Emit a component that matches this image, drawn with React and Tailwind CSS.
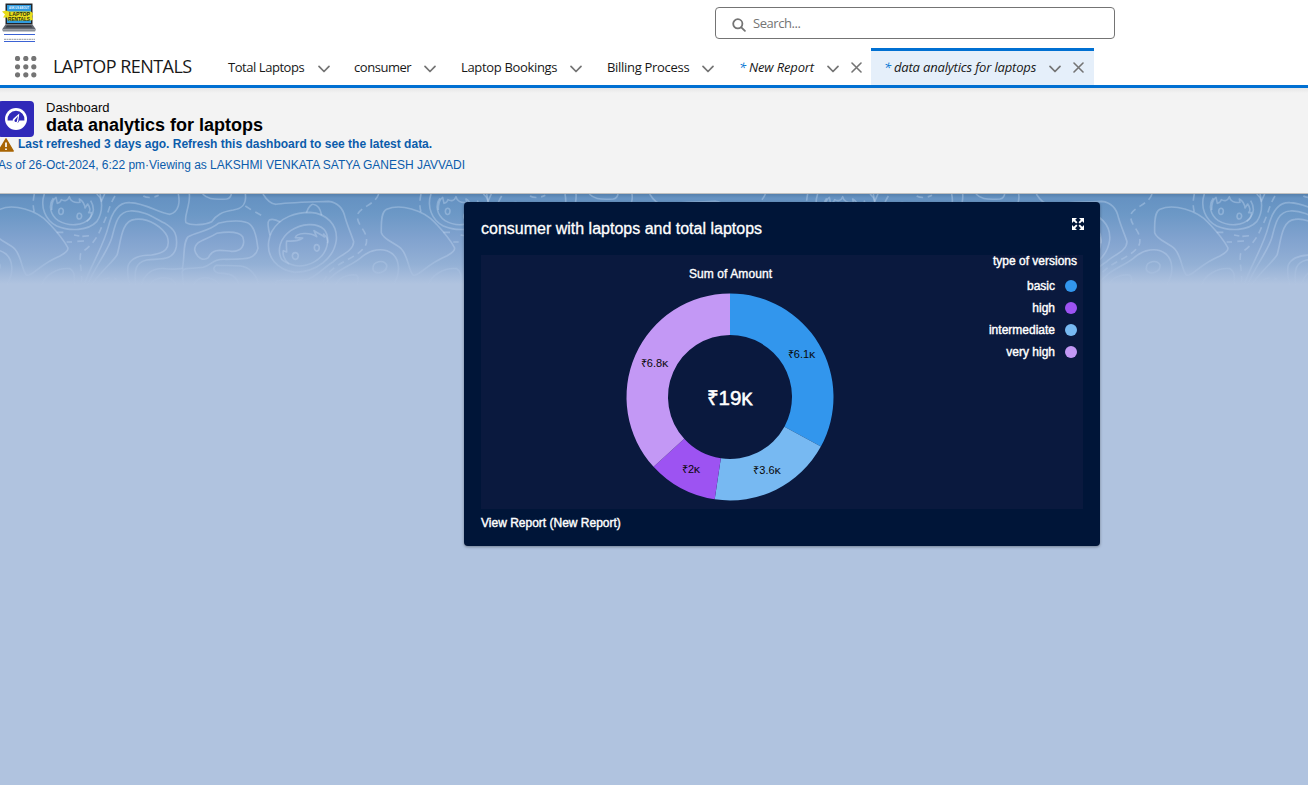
import React from "react";

const MAP_LINES = [
  // left slope and its inner ring
  "M1160 58 C1145 65 1143 90 1144 128 C1150 150 1190 160 1205 178 C1225 200 1225 240 1239 255 C1255 262 1275 225 1340 198 C1355 190 1368 182 1363 172 C1345 140 1330 125 1305 98 C1270 60 1200 40 1160 58 Z",
  // far-left summit
  "M970 290 C1000 240 1050 230 1080 205 C1110 178 1150 170 1178 192 C1200 212 1200 250 1185 275 L1180 292",
  "M1119 233 C1120 215 1150 207 1160 225 C1163 245 1135 253 1125 246 C1120 243 1118 239 1119 233 Z",
  "M1005 292 C1010 265 1040 252 1068 255 C1080 262 1074 280 1070 290",
  // bottom-left mound
  "M124 290 C130 255 175 232 210 236 C228 245 222 270 224 290",
  // head seen from the front
  "M133 12 C120 50 135 90 170 108 C210 125 265 122 290 95 C308 70 306 35 300 12",
  "M160 25 C145 45 150 75 175 92 C205 110 250 108 270 85 C285 65 280 45 272 32",
  "M155 60 C155 35 163 25 168 22 L172 40 C180 38 183 33 184 29 C193 34 203 33 208 20 C210 32 222 40 240 37 L238 27 C248 33 254 43 255 54 L263 42 C270 52 272 62 266 68 L274 68 C276 80 268 88 260 94",
  "M176 65 C176 52 189 52 190 62 C190 76 177 77 176 65 Z M231 79 C232 66 244 68 245 78 C243 91 232 89 231 79 Z",
  "M290 12 C300 20 303 28 304 34 L314 12",
  // central ridge contours
  "M250 290 C275 220 310 170 325 110 C335 70 355 35 390 38 C440 40 475 70 510 73 C538 65 540 35 535 12",
  "M260 290 C290 220 320 190 335 145 C345 110 350 65 390 63 C430 60 465 85 495 100 C525 118 533 135 529 170 C520 215 480 205 440 210 C410 217 400 235 408 290",
  "M272 290 C300 245 335 220 351 195 C362 165 362 90 405 88 C450 83 490 115 502 140 C512 175 495 190 455 195 C420 195 395 202 385 225 C380 245 385 270 390 290",
  "M424 290 C430 250 460 233 495 236 C520 240 535 235 550 236",
  "M447 290 C455 265 490 258 515 268 C525 275 528 285 529 290",
  // valley between the ridges
  "M568 12 C572 45 550 80 558 98 C575 108 615 105 635 95 C650 75 665 65 700 60 C730 55 740 40 736 12",
  "M608 12 C620 25 635 30 680 27 C690 25 693 18 694 12",
  "M547 236 C555 200 548 155 565 140 C590 125 625 125 655 100 C690 90 735 90 750 103 C770 120 770 155 774 175 C765 210 735 207 680 208 C640 205 635 225 610 232 C580 238 548 230 547 245 L550 290",
  "M584 180 C585 150 620 150 650 130 C680 125 715 123 728 140 C737 165 725 185 695 184 C665 182 640 172 625 203 C610 215 590 203 584 180 Z",
  "M578 290 C585 265 610 262 625 264 C645 268 655 278 658 290",
  "M717 290 C715 265 700 252 670 250 C640 252 635 232 650 226 C690 228 730 222 750 240 C768 255 775 275 777 290",
  // right contour round the eared head
  "M789 12 C800 30 815 42 828 43 C850 38 900 37 985 34 C1015 37 1030 55 1036 85 C1045 115 1055 135 1061 155 C1060 185 1020 195 1000 215 C980 225 955 255 925 268 C890 275 850 268 830 272 L824 290",
  "M815 125 C840 80 890 67 930 67 C980 70 1013 105 1009 150 C1002 205 950 245 885 247 C830 240 800 200 806 155 C808 142 811 133 815 125 Z",
  "M810 136 C803 110 802 95 808 90 C818 85 832 91 841 96 M919 68 C925 50 935 42 940 43 C953 45 962 60 965 76",
  "M845 208 C830 180 840 145 872 122 C905 100 950 97 972 118 C990 140 985 175 965 198 C940 225 900 235 872 223 C858 218 850 215 845 208 Z",
  "M867 222 C850 210 848 190 850 182 L860 186 C860 170 858 165 860 153 C870 153 890 157 908 144 L886 143 C890 128 930 126 950 140 L942 122 C955 132 965 133 973 141 L971 132 C980 140 985 150 982 160",
  "M877 198 C878 184 893 185 895 197 C894 211 879 212 877 198 Z M943 174 C943 160 956 161 958 173 C957 186 945 187 943 174 Z",
];

const MAP_DASHES = [
  "M103 12 C98 35 98 55 106 75",
  "M170 127 L190 127 M222 135 L238 138 M247 139 L268 137 M200 156 L216 156 M232 154 L252 153",
  "M345 18 C325 50 325 75 305 110 C290 150 270 170 242 190 C236 220 250 250 243 290",
  "M430 18 C440 24 460 24 476 16",
  "M736 48 L755 60 M766 66 L786 77",
  "M1136 12 C1125 45 1080 50 1072 75 C1070 110 1105 120 1099 160 C1085 200 1020 210 985 250 L960 290",
  "M310 270 C320 262 340 262 350 268",
];

const TILE_OFFSETS = [-1160, 0, 1160, 2320, 3480];

function MapPattern() {
  return (
    <svg className="block h-[92px] w-full" width="1308" height="92" viewBox="0 12 3924 276" preserveAspectRatio="none" fill="none">
      <defs>
        <linearGradient id="mapLine" gradientUnits="userSpaceOnUse" x1="0" y1="12" x2="0" y2="288">
          <stop offset="0" stopColor="#c3d8f0" stopOpacity="0.38" />
          <stop offset="0.65" stopColor="#c3d6f0" stopOpacity="0.38" />
          <stop offset="1" stopColor="#c3d6f0" stopOpacity="0" />
        </linearGradient>
      </defs>
      {TILE_OFFSETS.map((x) => (
        <g key={x} transform={`translate(${x} 0)`} stroke="url(#mapLine)" strokeWidth="4.8" strokeLinejoin="round">
          {MAP_LINES.map((d, i) => <path key={i} d={d} />)}
          {MAP_DASHES.map((d, i) => <path key={i} d={d} strokeDasharray="20 14" />)}
        </g>
      ))}
    </svg>
  );
}

function Logo() {
  return (
    <svg className="h-10 w-[34px] overflow-visible" width="34" height="40" viewBox="0 0 34 40">
      <path d="M3.5 0.5h27v21h-27z" fill="#22262b" />
      <path d="M5 2h24v18H5z" fill="#2f9be0" />
      <path d="M0 8.500l4-1 3 1h22l2 2-1 3 1 3-2 1H12l-6 0-1-3-4 0 2-3z" fill="#e8dc1c" />
      <g fontFamily="Liberation Sans, sans-serif" fontWeight="700" textAnchor="middle">
        <text x="17" y="6.3" fontSize="4" fill="#e9f5ff" textLength="20" lengthAdjust="spacingAndGlyphs">ASK US ABOUT</text>
        <text x="17.5" y="12.600" fontSize="6" fill="#2b3210" textLength="21" lengthAdjust="spacingAndGlyphs">LAPTOP</text>
        <text x="17" y="17.800" fontSize="6" fill="#2b3210" textLength="22" lengthAdjust="spacingAndGlyphs">RENTALS</text>
      </g>
      <path d="M3.5 21.5h27l3.5 5H0z" fill="#62676f" />
      <path d="M5 22.5h24l1.500 2H3.500z" fill="#393e46" />
      <path d="M0 26.500h34l-1 2H1z" fill="#8b9098" />
      <path d="M2 31.500h31M2 38.500h31" stroke="#3b62d4" strokeWidth="1.1" />
      <path d="M2 36.300h31" stroke="#a9adb3" strokeWidth="1.300" strokeDasharray="2 .5" />
    </svg>
  );
}

function Waffle() {
  return (
    <svg width="22" height="22" viewBox="0 0 22 22" fill="#747474">
      {[2.5, 10.8, 18.8].map((y) => [2.5, 10.8, 18.8].map((x) => <circle key={`${x}-${y}`} cx={x} cy={y} r="2.600" />))}
    </svg>
  );
}

function Chevron() {
  return (
    <svg className="mt-1" width="12" height="8" viewBox="0 0 12 8" fill="none" stroke="#747474" strokeWidth="1.700" strokeLinecap="round" strokeLinejoin="round">
      <path d="M1 1.300l5 5.200L11 1.300" />
    </svg>
  );
}

function Close() {
  return (
    <svg className="mt-px" width="11" height="11" viewBox="0 0 11 11" fill="none" stroke="#747474" strokeWidth="1.600" strokeLinecap="round">
      <path d="M1 1l9 9M10 1l-9 9" />
    </svg>
  );
}

function NavItem({ width, label, textWidth }) {
  return (
    <div className={`flex h-[37px] items-center ${width}`}>
      <span className={`whitespace-nowrap pt-0.5 ${textWidth}`}>{label}</span>
      <Chevron />
    </div>
  );
}

const SLICES = [
  { start: 0, end: 118.6, color: "#3296ed" },
  { start: 118.6, end: 188.5, color: "#77b9f2" },
  { start: 188.5, end: 227.6, color: "#9d53f2" },
  { start: 227.6, end: 360, color: "#c398f5" },
];

function ringPath(start, end, cx = 249, cy = 142, outer = 103.5, inner = 62) {
  const at = (deg, r) => {
    const a = (deg * Math.PI) / 180;
    return `${cx + r * Math.sin(a)} ${cy - r * Math.cos(a)}`;
  };
  const large = end - start > 180 ? 1 : 0;
  return `M${at(start, outer)}A${outer} ${outer} 0 ${large} 1 ${at(end, outer)}L${at(end, inner)}A${inner} ${inner} 0 ${large} 0 ${at(start, inner)}Z`;
}

const SLICE_LABELS = [
  { x: 320.500, y: 103, text: "₹6.1" },
  { x: 286, y: 219, text: "₹3.6" },
  { x: 210, y: 218, text: "₹2" },
  { x: 173.500, y: 112, text: "₹6.8" },
];

function Donut() {
  return (
    <svg width="500" height="254" viewBox="0 0 500 254" fontFamily="Liberation Sans, sans-serif" textAnchor="middle">
      <text x="249.500" y="23" fontSize="12" fill="#fff" stroke="#fff" strokeWidth=".35" textLength="83">Sum of Amount</text>
      {SLICES.map((s) => <path key={s.start} d={ringPath(s.start, s.end)} fill={s.color} />)}
      {SLICE_LABELS.map((l) => (
        <text key={l.text} x={l.x} y={l.y} fontSize="11" fill="#080707">{l.text}<tspan fontSize="9" stroke="#080707" strokeWidth=".2">K</tspan></text>
      ))}
      <text x="248.500" y="150" fontSize="20.500" fill="#fff" stroke="#fff" strokeWidth=".5">₹19<tspan fontSize="16.500" strokeWidth=".8">K</tspan></text>
    </svg>
  );
}

const LEGEND = [
  { name: "basic", dot: "bg-[#3296ed]" },
  { name: "high", dot: "bg-[#9d53f2]" },
  { name: "intermediate", dot: "bg-[#77b9f2]" },
  { name: "very high", dot: "bg-[#c398f5]" },
];

function ChartCard() {
  return (
    <section className="ml-[464px] mt-2 h-[344px] w-[636px] rounded bg-[#001538] pl-[17px] pr-[17px] text-white shadow-[0_1px_3px_rgba(0,0,0,0.35)]">
      <div className="flex h-[53px] items-start justify-between">
        <h2 className="mt-[18px] text-base leading-[18px] [-webkit-text-stroke:0.3px_white]">consumer with laptops and total laptops</h2>
        <svg className="-mr-px mt-4" width="12" height="12" viewBox="0 0 12 12" fill="#fff" stroke="#fff">
          <path stroke="none" d="M0 0h5L0 5zM12 0v5L7 0zM0 12V7L5 12zM12 12H7L12 7z" />
          <path strokeWidth="1.900" d="M1.500 1.500l3.300 3.300M10.500 1.500L7.200 4.800M1.500 10.500l3.300-3.300M10.500 10.500L7.200 7.200" />
        </svg>
      </div>
      <div className="flex h-[254px] justify-between bg-[#0a193e]">
        <Donut />
        <div className="flex flex-col items-end pr-1.5 text-xs [-webkit-text-stroke:0.4px_white]">
          <div className="whitespace-nowrap leading-3">type of versions</div>
          <ul className="mt-2">
            {LEGEND.map((item) => (
              <li key={item.name} className="flex h-[22px] items-center justify-end gap-2.5">
                <span>{item.name}</span>
                <span className={`size-3 rounded-full ${item.dot}`} />
              </li>
            ))}
          </ul>
        </div>
      </div>
      <div className="mt-1.5 text-xs leading-4 [-webkit-text-stroke:0.4px_white]">View Report (New Report)</div>
    </section>
  );
}

export default function App() {
  return (
    <div className="flex h-[785px] w-[1308px] flex-col overflow-hidden bg-[#b0c3df] font-['Liberation_Sans',Arial,sans-serif]">
      <header className="h-[88px] shrink-0 border-b-[3px] border-[#0070d2] bg-white font-['Open_Sans',sans-serif] text-[#181818]">
        <div className="flex h-12 items-start">
          <div className="w-[715px] pl-0.5 pt-[3px]"><Logo /></div>
          <div className="mt-[7px] flex h-8 w-[400px] items-center rounded border border-[#747474] pl-4">
            <svg className="mt-1" width="14" height="14" viewBox="0 0 14 14" fill="none" stroke="#747474" strokeWidth="1.800" strokeLinecap="round">
              <circle cx="5.800" cy="5.800" r="4.600" />
              <path d="M9.300 9.300l3.600 3.600" />
            </svg>
            <span className="ml-[7px] pt-0.5 text-[13px] tracking-[-0.45px] text-[#747474]">Search...</span>
          </div>
        </div>
        <nav className="flex h-[37px] items-center text-[13px] tracking-[-0.3px]">
          <div className="w-[53px] pl-[15px]"><Waffle /></div>
          <div className="w-[175px] whitespace-nowrap text-[18px] tracking-[-0.55px]">LAPTOP RENTALS</div>
          <NavItem width="w-[126px]" textWidth="w-[90px] tracking-[-0.45px]" label="Total Laptops" />
          <NavItem width="w-[107px]" textWidth="w-[70px] tracking-[-0.45px]" label="consumer" />
          <NavItem width="w-[146px]" textWidth="w-[109px] tracking-[-0.33px]" label="Laptop Bookings" />
          <NavItem width="w-[132px]" textWidth="w-[95px] tracking-[-0.3px]" label="Billing Process" />
          <div className="flex h-[37px] w-[132px] items-center">
            <span className="w-[88px] whitespace-nowrap pt-0.5 italic tracking-[-0.15px]"><span className="mr-[3px] text-[#0176d3]">*</span>New Report</span>
            <Chevron />
            <span className="ml-[11.5px]"><Close /></span>
          </div>
          <div className="flex h-[37px] w-[223px] items-center border-t-[3px] border-[#0070d2] bg-[#e5effa] pb-[3px] pl-[13px]">
            <span className="w-[165px] whitespace-nowrap pt-0.5 italic tracking-[-0.17px]"><span className="mr-[3px] text-[#0176d3]">*</span>data analytics for laptops</span>
            <Chevron />
            <span className="ml-[11.5px]"><Close /></span>
          </div>
        </nav>
      </header>

      <div className="h-[106px] shrink-0 border-b border-[#c0c0c0] bg-[linear-gradient(#e6e6e6,#f3f3f3_5px)]">
        <div className="flex h-[49px] items-start pt-[13px]">
          <div className="-ml-0.5 flex size-9 items-center justify-center rounded bg-[#3029b9]">
            <svg width="22" height="22" viewBox="0 0 22 22">
              <circle cx="11" cy="11" r="11" fill="#fff" />
              <path d="M2.600 12.500A8.500 8.500 0 1 1 19.400 12.500H14.500A3.700 3.700 0 0 1 7.500 12.500z" fill="#3029b9" />
              <path d="M14.300 5.500L8.500 10.500a2.900 2.900 0 1 0 4.800 2.500z" fill="#fff" />
              <path d="M13 8L10 11.600a1.300 1.300 0 1 0 2 .8z" fill="#3029b9" />
            </svg>
          </div>
          <div className="ml-3">
            <div className="text-[13px] leading-[14px] text-[#080707]">Dashboard</div>
            <h1 className="text-lg font-bold leading-5 text-black">data analytics for laptops</h1>
          </div>
        </div>
        <div className="flex h-4 items-start text-xs font-bold leading-[14px] text-[#0b5cab]">
          <svg className="-ml-0.5 mt-[1px]" width="16" height="14" viewBox="0 0 16 14">
            <path d="M8 .8L15.300 13H.7z" fill="#a86403" stroke="#a86403" strokeWidth="1.300" strokeLinejoin="round" />
            <path d="M8 4.500v4.500M8 10.500v1.500" stroke="#fff" strokeWidth="1.700" />
          </svg>
          <span className="ml-1 whitespace-nowrap">Last refreshed 3 days ago. Refresh this dashboard to see the latest data.</span>
        </div>
        <div className="-ml-0.5 mt-1 text-xs leading-4 tracking-[-0.012px] text-[#0b5cab]">As of 26-Oct-2024, 6:22 pm·Viewing as LAKSHMI VENKATA SATYA GANESH JAVVADI</div>
      </div>

      <main className="grid flex-1 grid-cols-1 grid-rows-1 bg-[#b0c3df]">
        <div className="col-start-1 row-start-1 h-[92px] bg-[linear-gradient(#5580ad_0px,#6592c2_4px,#6c98c6_20px,#82a3cf_46px,#93b0d5_70px,#b0c3df_90px)]">
          <MapPattern />
        </div>
        <div className="col-start-1 row-start-1"><ChartCard /></div>
      </main>
    </div>
  );
}
